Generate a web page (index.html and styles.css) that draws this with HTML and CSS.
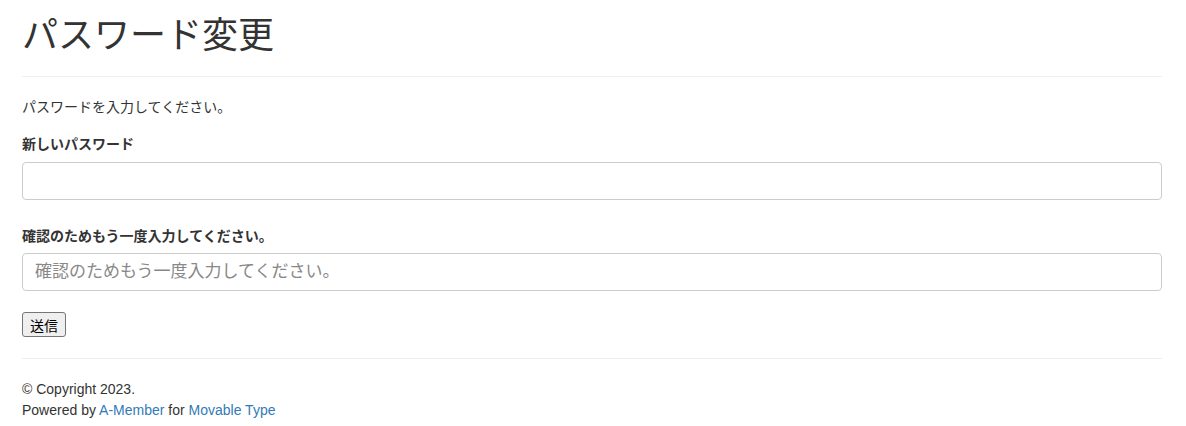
FILE: index.html
```html
<!DOCTYPE html>
<html lang="ja">
<head>
<meta charset="utf-8">
<title>パスワード変更</title>
<link rel="stylesheet" href="styles.css">
</head>
<body>
<div class="container">
  <h1 class="title">パスワード変更</h1>
  <hr class="rule">
  <p class="lead-text">パスワードを入力してください。</p>
  <form class="form">
    <div class="group">
      <label class="label" for="pw1">新しいパスワード</label>
      <input class="control" id="pw1" type="password">
    </div>
    <div class="group group-last">
      <label class="label" for="pw2">確認のためもう一度入力してください。</label>
      <input class="control" id="pw2" type="password" placeholder="確認のためもう一度入力してください。">
    </div>
    <button class="submit" type="button">送信</button>
  </form>
  <hr class="rule footer-rule">
  <footer class="footer">
    <div>© Copyright 2023.</div>
    <div>Powered by <a href="#">A-Member</a> for <a href="#">Movable Type</a></div>
  </footer>
</div>
</body>
</html>
```
FILE: styles.css
```css
* { box-sizing: border-box; }
html, body { margin: 0; padding: 0; background: #fff; }
body {
  font-family: "Liberation Sans", Arial, "Noto Sans CJK JP", sans-serif;
  font-size: 14px;
  line-height: 20px;
  color: #333;
}
.container {
  padding: 0 24px 0 22px;
}
.title {
  margin: 16px 0 0;
  font-size: 36px;
  line-height: 40px;
  font-weight: 400;
  color: #333;
}
.rule {
  margin: 20px 0;
  border: 0;
  border-top: 1px solid #eee;
  height: 0;
}
.lead-text {
  margin: 0 0 17px;
}
.form { margin: 0; }
.group {
  margin-bottom: 26px;
}
.group-last { margin-bottom: 21px; }
.label {
  display: block;
  font-weight: bold;
  margin-bottom: 8px;
}
.group-last .label { margin-bottom: 7px; }
.control {
  display: block;
  width: 100%;
  height: 38px;
  padding: 6px 12px;
  border: 1px solid #ccc;
  border-radius: 4px;
  font-family: "Liberation Sans", Arial, "Noto Sans CJK JP", sans-serif;
  font-size: 17px;
  color: #555;
  background: #fff;
}
.control::placeholder { color: #888; }
.submit {
  display: block;
  height: 25px;
  padding: 1px 7px;
  font-family: "Liberation Sans", Arial, "Noto Sans CJK JP", sans-serif;
  font-size: 14px;
  color: #000;
  background: #efefef;
  border: 1px solid #767676;
  border-radius: 3px;
}
.footer-rule { margin: 21px 0 20px; }
.footer {
  line-height: 21px;
  padding-bottom: 10px;
}
.footer a { color: #337ab7; text-decoration: none; }
```
